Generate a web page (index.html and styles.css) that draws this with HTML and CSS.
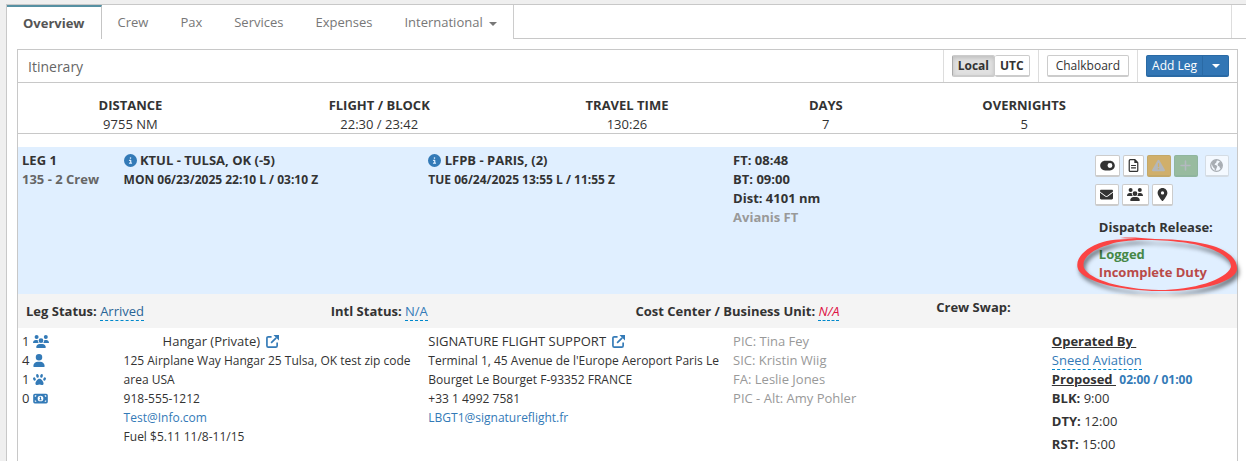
FILE: index.html
```html
<!DOCTYPE html>
<html lang="en">
<head>
    <meta charset="UTF-8">
    <meta name="viewport" content="width=device-width, initial-scale=1.0">
    <title>Trip Overview</title>
    <link rel="stylesheet" href="styles.css">
</head>
<body>
    <!-- Icons -->
    <svg class="icon-defs" aria-hidden="true">
        <symbol id="i-toggle" viewBox="0 0 576 512"><path d="M192 64C86 64 0 150 0 256S86 448 192 448H384c106 0 192-86 192-192s-86-192-192-192H192zm192 96a96 96 0 1 1 0 192 96 96 0 1 1 0-192z"/></symbol>
        <symbol id="i-file" viewBox="0 0 384 512"><path d="M64 24H240L360 144V448a40 40 0 0 1-40 40H64a40 40 0 0 1-40-40V64A40 40 0 0 1 64 24z" fill="none" stroke="currentColor" stroke-width="48"/><path d="M224 24V160H360V120L264 24zM96 232H288V280H96zM96 328H288V376H96z"/></symbol>
        <symbol id="i-warning" viewBox="0 0 512 512"><path d="M256 32c14.2 0 27.3 7.5 34.5 19.8l216 368c7.3 12.4 7.3 27.7 .2 40.1S486.3 480 472 480H40c-14.3 0-27.6-7.7-34.7-20.1s-7-27.8 .2-40.1l216-368C228.7 39.5 241.8 32 256 32zm0 128c-13.3 0-24 10.7-24 24V296c0 13.3 10.7 24 24 24s24-10.7 24-24V184c0-13.3-10.7-24-24-24zm32 224a32 32 0 1 0 -64 0 32 32 0 1 0 64 0z"/></symbol>
        <symbol id="i-plus" viewBox="0 0 448 512"><path d="M224 80V432M48 256H400" fill="none" stroke="currentColor" stroke-width="60" stroke-linecap="round"/></symbol>
        <symbol id="i-globe" viewBox="0 0 512 512"><circle cx="256" cy="256" r="228" fill="none" stroke="currentColor" stroke-width="52"/><path d="M50 190L120 70L250 30L290 80L240 110L250 150L200 180L180 230L250 250L290 300L260 350L230 440L190 470L180 370L120 320L90 260zM330 160L380 120L440 130L490 230L450 340L400 380L370 300L310 270L300 210z"/></symbol>
        <symbol id="i-mail" viewBox="0 0 512 512"><path d="M502.3 190.8c3.9-3.1 9.7-.2 9.7 4.7V400c0 26.5-21.5 48-48 48H48c-26.5 0-48-21.5-48-48V195.6c0-5 5.7-7.8 9.7-4.7 22.4 17.4 52.1 39.5 154.1 113.6 21.1 15.4 56.7 47.8 92.2 47.6 35.7.3 72-32.8 92.3-47.6 102-74.1 131.6-96.3 154-113.7zM256 320c23.2.4 56.6-29.2 73.4-41.4 132.7-96.3 142.8-104.7 173.4-128.7 5.8-4.5 9.2-11.5 9.2-18.9v-19c0-26.5-21.5-48-48-48H48c-26.5 0-48 21.5-48 48v19c0 7.4 3.4 14.3 9.2 18.9 30.6 23.9 40.7 32.4 173.4 128.7 16.8 12.2 50.2 41.8 73.4 41.4z"/></symbol>
        <symbol id="i-users" viewBox="0 0 640 512"><path d="M144 0a80 80 0 1 1 0 160A80 80 0 1 1 144 0zM512 0a80 80 0 1 1 0 160A80 80 0 1 1 512 0zM0 298.7C0 239.8 47.8 192 106.7 192h42.7c15.9 0 31 3.5 44.6 9.7c-1.3 7.2-1.9 14.7-1.9 22.3c0 38.2 16.8 72.5 43.3 96H21.3C9.6 320 0 310.4 0 298.7zM405.3 320c26.6-23.5 43.3-57.8 43.3-96c0-7.6-.7-15-1.9-22.3c13.6-6.3 28.7-9.7 44.6-9.7h42.7C592.2 192 640 239.8 640 298.7c0 11.8-9.6 21.3-21.3 21.3H405.3zM224 224a96 96 0 1 1 192 0 96 96 0 1 1 -192 0zM128 485.3C128 411.7 187.7 352 261.3 352H378.7C452.3 352 512 411.7 512 485.3c0 14.7-11.9 26.7-26.7 26.7H154.7c-14.7 0-26.7-11.9-26.7-26.7z"/></symbol>
        <symbol id="i-pin" viewBox="0 0 384 512"><path d="M215.7 499.2C267 435 384 279.4 384 192C384 86 298 0 192 0S0 86 0 192c0 87.4 117 243 168.3 307.2c12.3 15.3 35.1 15.3 47.4 0zM192 128a64 64 0 1 1 0 128 64 64 0 1 1 0-128z"/></symbol>
        <symbol id="i-info" viewBox="0 0 512 512"><path d="M256 512A256 256 0 1 0 256 0a256 256 0 1 0 0 512zM216 336h24V272H216c-13.3 0-24-10.7-24-24s10.7-24 24-24h48c13.3 0 24 10.7 24 24v88h8c13.3 0 24 10.7 24 24s-10.7 24-24 24H216c-13.3 0-24-10.7-24-24s10.7-24 24-24zm40-208a32 32 0 1 1 0 64 32 32 0 1 1 0-64z"/></symbol>
        <symbol id="i-user" viewBox="0 0 448 512"><path d="M224 256A128 128 0 1 0 224 0a128 128 0 1 0 0 256zm-45.7 48C79.8 304 0 383.8 0 482.3C0 498.7 13.3 512 29.7 512H418.3c16.4 0 29.7-13.3 29.7-29.7C448 383.8 368.2 304 269.7 304H178.3z"/></symbol>
        <symbol id="i-paw" viewBox="0 0 512 512"><ellipse cx="176" cy="112" rx="52" ry="78" transform="rotate(-15 176 112)"/><ellipse cx="336" cy="112" rx="52" ry="78" transform="rotate(15 336 112)"/><ellipse cx="56" cy="236" rx="48" ry="70" transform="rotate(-25 56 236)"/><ellipse cx="456" cy="236" rx="48" ry="70" transform="rotate(25 456 236)"/><path d="M256 224c-80 0-160 110-160 186 0 40 30 62 66 62 36 0 60-20 94-20s58 20 94 20c36 0 66-22 66-62 0-76-80-186-160-186z"/></symbol>
        <symbol id="i-money" viewBox="0 0 576 512"><path fill-rule="evenodd" d="M64 64H512a64 64 0 0 1 64 64V384a64 64 0 0 1-64 64H64a64 64 0 0 1-64-64V128A64 64 0 0 1 64 64zM288 144a112 112 0 1 0 0 224a112 112 0 1 0 0-224zM64 128V192A64 64 0 0 0 128 128zM512 128H448A64 64 0 0 0 512 192zM64 384H128A64 64 0 0 0 64 320zM512 384V320A64 64 0 0 0 448 384z"/><path d="M250 190H310V290H330V325H246V290H270V225H250z"/></symbol>
        <symbol id="i-out" viewBox="0 0 14 14"><path d="M6 2H2.500Q1 2 1 3.500V11.500Q1 13 2.500 13H10.500Q12 13 12 11.500V8M5.500 8.500L11 3" fill="none" stroke="currentColor" stroke-width="1.800"/><path d="M8 0H14V6z"/></symbol>
    </svg>

    <main class="page">
        <!-- Tabs -->
        <nav class="tabs">
            <div class="tab-list">
                <a href="#overview" class="active">Overview</a>
                <a href="#crew">Crew</a>
                <a href="#pax">Pax</a>
                <a href="#services">Services</a>
                <a href="#expenses">Expenses</a>
                <a href="#international">International <span class="caret"></span></a>
            </div>
            <div class="tab-end"></div>
        </nav>

        <section class="panel">
            <header class="panel-head">
                <h2>Itinerary</h2>
                <div class="tools btn-group">
                    <button type="button" class="btn toggle on">Local</button>
                    <button type="button" class="btn toggle">UTC</button>
                </div>
                <div class="tools">
                    <button type="button" class="btn wide">Chalkboard</button>
                </div>
                <div class="tools btn-group">
                    <button type="button" class="btn primary">Add Leg</button>
                    <button type="button" class="btn primary drop" aria-label="More"><span class="caret"></span></button>
                </div>
            </header>

            <dl class="totals">
                <div><dt>DISTANCE</dt><dd>9755 NM</dd></div>
                <div><dt>FLIGHT / BLOCK</dt><dd>22:30 / 23:42</dd></div>
                <div><dt>TRAVEL TIME</dt><dd>130:26</dd></div>
                <div><dt>DAYS</dt><dd>7</dd></div>
                <div><dt>OVERNIGHTS</dt><dd>5</dd></div>
            </dl>

            <!-- Leg -->
            <div class="leg-grid leg-head">
                <div>LEG 1<br><span class="dim">135 - 2 Crew</span></div>
                <div>
                    <svg class="icon info"><use href="#i-info"/></svg> KTUL - TULSA, OK (-5)
                    <div class="small">MON 06/23/2025 22:10 L / 03:10 Z</div>
                </div>
                <div>
                    <svg class="icon info"><use href="#i-info"/></svg> LFPB - PARIS, (2)
                    <div class="small">TUE 06/24/2025 13:55 L / 11:55 Z</div>
                </div>
                <div>FT: 08:48<br>BT: 09:00<br>Dist: 4101 nm<br><span class="muted">Avianis FT</span></div>
                <div class="actions">
                    <div class="btn-row">
                        <button type="button" class="btn sq w25" aria-label="Toggle"><svg class="icon w15"><use href="#i-toggle"/></svg></button>
                        <button type="button" class="btn sq w21" aria-label="Document"><svg class="icon"><use href="#i-file"/></svg></button>
                        <button type="button" class="btn sq warn" aria-label="Warnings" disabled><svg class="icon"><use href="#i-warning"/></svg></button>
                        <button type="button" class="btn sq add" aria-label="Add" disabled><svg class="icon"><use href="#i-plus"/></svg></button>
                        <button type="button" class="btn sq globe" aria-label="International" disabled><svg class="icon"><use href="#i-globe"/></svg></button>
                    </div>
                    <div class="btn-row">
                        <button type="button" class="btn sq" aria-label="Email"><svg class="icon"><use href="#i-mail"/></svg></button>
                        <button type="button" class="btn sq w27" aria-label="Passengers"><svg class="icon w16"><use href="#i-users"/></svg></button>
                        <button type="button" class="btn sq w21" aria-label="Location"><svg class="icon"><use href="#i-pin"/></svg></button>
                    </div>
                    <div class="release">
                        <p>Dispatch Release:</p>
                        <div class="release-state">
                            <span class="ok">Logged</span><br><span class="bad">Incomplete Duty</span>
                            <svg class="circle-mark" viewBox="0 0 164 66" aria-hidden="true">
                                <path fill-rule="evenodd" d="M45 4C56 3 66 4 80 5C104 5 124 8 138 12C156 18 163 27 162 36C159 49 122 58 84 57C46 57 12 48 4 37C-2 27 8 14 28 8C38 5 50 5 62 5ZM62 6C50 7 40 8 33 11C16 16 6 25 9 34C15 46 46 55 84 56C118 56 151 46 156 33C157 20 128 10 104 8C88 6 76 6 62 6Z"/>
                            </svg>
                        </div>
                    </div>
                </div>
            </div>

            <div class="status">
                <div>Leg Status: <a href="#status" class="edit dark">Arrived</a></div>
                <div>Intl Status: <a href="#intl" class="edit">N/A</a></div>
                <div>Cost Center / Business Unit: <a href="#unit" class="edit empty">N/A</a></div>
                <div class="swap">Crew Swap:</div>
            </div>

            <div class="leg-grid leg-body">
                <div class="counts">
                    <div>1 <svg class="icon w16"><use href="#i-users"/></svg></div>
                    <div>4 <svg class="icon w12"><use href="#i-user"/></svg></div>
                    <div>1 <svg class="icon"><use href="#i-paw"/></svg></div>
                    <div>0 <svg class="icon w15"><use href="#i-money"/></svg></div>
                </div>
                <div>
                    <span class="hangar">Hangar (Private)</span> <a href="#fbo1" aria-label="Open FBO"><svg class="icon out"><use href="#i-out"/></svg></a>
                    <div class="small">
                        125 Airplane Way Hangar 25 Tulsa, OK test zip code area USA<br>
                        918-555-1212<br>
                        <a href="mailto:Test@Info.com">Test@Info.com</a><br>
                        Fuel $5.11 11/8-11/15
                    </div>
                </div>
                <div>
                    SIGNATURE FLIGHT SUPPORT <a href="#fbo2" aria-label="Open FBO"><svg class="icon out"><use href="#i-out"/></svg></a>
                    <div class="small">
                        Terminal 1, 45 Avenue de l'Europe Aeroport Paris Le Bourget Le Bourget F-93352 FRANCE<br>
                        +33 1 4992 7581<br>
                        <a href="mailto:LBGT1@signatureflight.fr">LBGT1@signatureflight.fr</a>
                    </div>
                </div>
                <div class="muted">PIC: Tina Fey<br>SIC: Kristin Wiig<br>FA: Leslie Jones<br>PIC - Alt: Amy Pohler</div>
                <div class="duty">
                    <b class="line">Operated By&nbsp;</b><br>
                    <a href="#operator" class="edit">Sneed Aviation</a><br>
                    <b class="line">Proposed&nbsp;</b> <a href="#times" class="times">02:00 / 01:00</a><br>
                    <b>BLK:</b> 9:00
                    <p><b>DTY:</b> 12:00</p>
                    <p><b>RST:</b> 15:00</p>
                </div>
            </div>
        </section>
    </main>
</body>
</html>
```
FILE: styles.css
```css
* {
    box-sizing: border-box;
}

body {
    margin: 0;
    background: #efefef;
    color: #333;
    font-family: "Open Sans", sans-serif;
    font-size: 13px;
    line-height: 19px;
}

a {
    color: #337ab7;
    text-decoration: none;
}

p, dl, dd, h2 {
    margin: 0;
}

.icon-defs {
    position: absolute;
    width: 0;
    height: 0;
}

.icon {
    width: 13px;
    height: 13px;
    fill: currentColor;
    vertical-align: -2px;
}

.w12 { width: 12px; }
.w15 { width: 15px; }
.w16 { width: 16px; }

.small {
    font-size: 12px;
}

.caret {
    display: inline-block;
    border: 4px solid transparent;
    border-top-color: currentColor;
    border-bottom: 0;
    vertical-align: middle;
}

.page {
    display: flex;
    flex-direction: column;
    min-height: calc(100vh - 4px);
    margin: 4px 0 0 6px;
    border-top: 1px solid #c8c8c8;
    border-left: 1px solid #c8c8c8;
    background: #fff;
}

/* Tabs */
.tabs {
    display: flex;
    justify-content: space-between;
    height: 34px;
    border-bottom: 1px solid #c8c8c8;
}

.tab-list {
    display: flex;
    height: 34px;
    border-right: 1px solid #ccc;
    background: #fff;
}

.tabs a {
    padding: 8px 16px;
    color: #777;
}

.tabs a .caret {
    margin-left: 3px;
}

.tabs a.active {
    padding-top: 7px;
    border-top: 2px solid #5690a2;
    border-right: 1px solid #c5c5c5;
    color: #555;
    font-weight: bold;
}

.tab-end {
    width: 15px;
    border-left: 1px solid #ddd;
}

/* Itinerary panel */
.panel {
    flex: 1;
    margin: 10px 8px 0 10px;
    border: 1px solid #c8c8c8;
    border-bottom: 0;
}

.panel-head {
    display: flex;
    height: 33px;
    border-bottom: 1px solid #c8c8c8;
}

.panel-head h2 {
    flex: 1;
    padding: 7px 10px;
    color: #666;
    font-size: 14px;
    font-weight: normal;
}

.tools {
    padding: 5px 8px;
    border-left: 1px solid #ddd;
}

.btn-group {
    display: flex;
}

.btn {
    height: 22px;
    padding: 0 5px;
    border: 1px solid #ccc;
    border-bottom-width: 2px;
    border-radius: 2px;
    background: #fff;
    color: #333;
    font: inherit;
    font-size: 12px;
    line-height: 18px;
    cursor: pointer;
}

.btn.toggle {
    font-weight: bold;
    border-left: 0;
}

.btn.toggle.on {
    border-left: 1px solid #aaa;
    background: #e0e0e0;
    box-shadow: inset 0 2px 4px rgba(0, 0, 0, 0.15);
}

.btn.wide {
    padding: 0 8px;
}

.btn.primary {
    border-color: #2a6aa5;
    background: #3276b5;
    color: #fff;
    border-radius: 2px 0 0 2px;
}

.btn.primary.drop {
    width: 26px;
    border-left: 0;
    border-radius: 0 2px 2px 0;
}

/* Trip totals */
.totals {
    display: grid;
    grid-template-columns: 225fr 273fr 223fr 175fr 222fr 102fr;
    padding-top: 13px;
    border-bottom: 1px solid #c8c8c8;
    text-align: center;
}

.totals dt {
    font-weight: bold;
}

.totals dd {
    line-height: 18px;
}

/* Leg rows */
.leg-grid {
    display: grid;
    grid-template-columns: 1fr 3fr 3fr 3fr 2fr;
}

.leg-grid > div {
    padding: 0 8px 0 4px;
}

.leg-head {
    margin-top: 13px;
    padding: 4px 0 5px;
    background: #e0efff;
    font-weight: bold;
}

.icon.info {
    color: #337ab7;
}

.dim {
    color: #666;
}

.muted {
    color: #999;
}

.leg-head > .actions {
    padding: 4px 0 0 61px;
}

.btn-row {
    display: flex;
    gap: 3px;
    margin-bottom: 7px;
}

.btn.sq {
    display: flex;
    align-items: center;
    justify-content: center;
    flex: none;
    width: 24px;
    padding: 0;
}

.btn.sq.w21 { width: 21px; }
.btn.sq.w25 { width: 25px; }
.btn.sq.w27 { width: 27px; }

.btn.sq.warn {
    border-color: #c3a869;
    background: #d0af6b;
    color: #b4b7ba;
}

.btn.sq.add {
    border-color: #90b59e;
    background: #98bb9f;
    color: #b4b9c0;
}

.btn.sq.globe {
    margin-left: 4px;
    border-color: #d4dce4;
    background: #f4f9ff;
    color: #a8adb3;
}

.release {
    padding: 5px 0 0 4px;
}

.release-state {
    position: relative;
    padding: 8px 0;
    line-height: 18px;
}

.ok { color: #468847; }
.bad { color: #b94a48; }

/* Hand-drawn red ring */
.circle-mark {
    position: absolute;
    top: -3px;
    left: -24px;
    width: 164px;
    height: 66px;
    overflow: visible;
    fill: #fb4444;
    filter: drop-shadow(2px 4px 2px rgba(0, 0, 0, 0.5));
    pointer-events: none;
}

.status {
    display: grid;
    grid-template-columns: repeat(4, 1fr);
    padding: 8px 0 7px;
    background: #f4f4f4;
    font-weight: bold;
}

.status > div {
    padding-left: 8px;
}

.status > .swap {
    padding-left: 4px;
    margin-top: -4px;
}

.edit {
    border-bottom: 1px dashed #0088cc;
    font-weight: normal;
}

.edit.dark {
    color: #2a6496;
}

.edit.empty {
    color: #dd1144;
    font-style: italic;
}

.leg-body {
    padding-top: 4px;
}

.counts .icon {
    color: #337ab7;
}

.hangar {
    padding-left: 39px;
}

.icon.out {
    margin-left: 3px;
}

.leg-body > .duty {
    padding-left: 18px;
}

.line {
    text-decoration: underline;
}

.times {
    font-size: 12px;
    font-weight: bold;
}

.duty p {
    margin-top: 4px;
}
```
